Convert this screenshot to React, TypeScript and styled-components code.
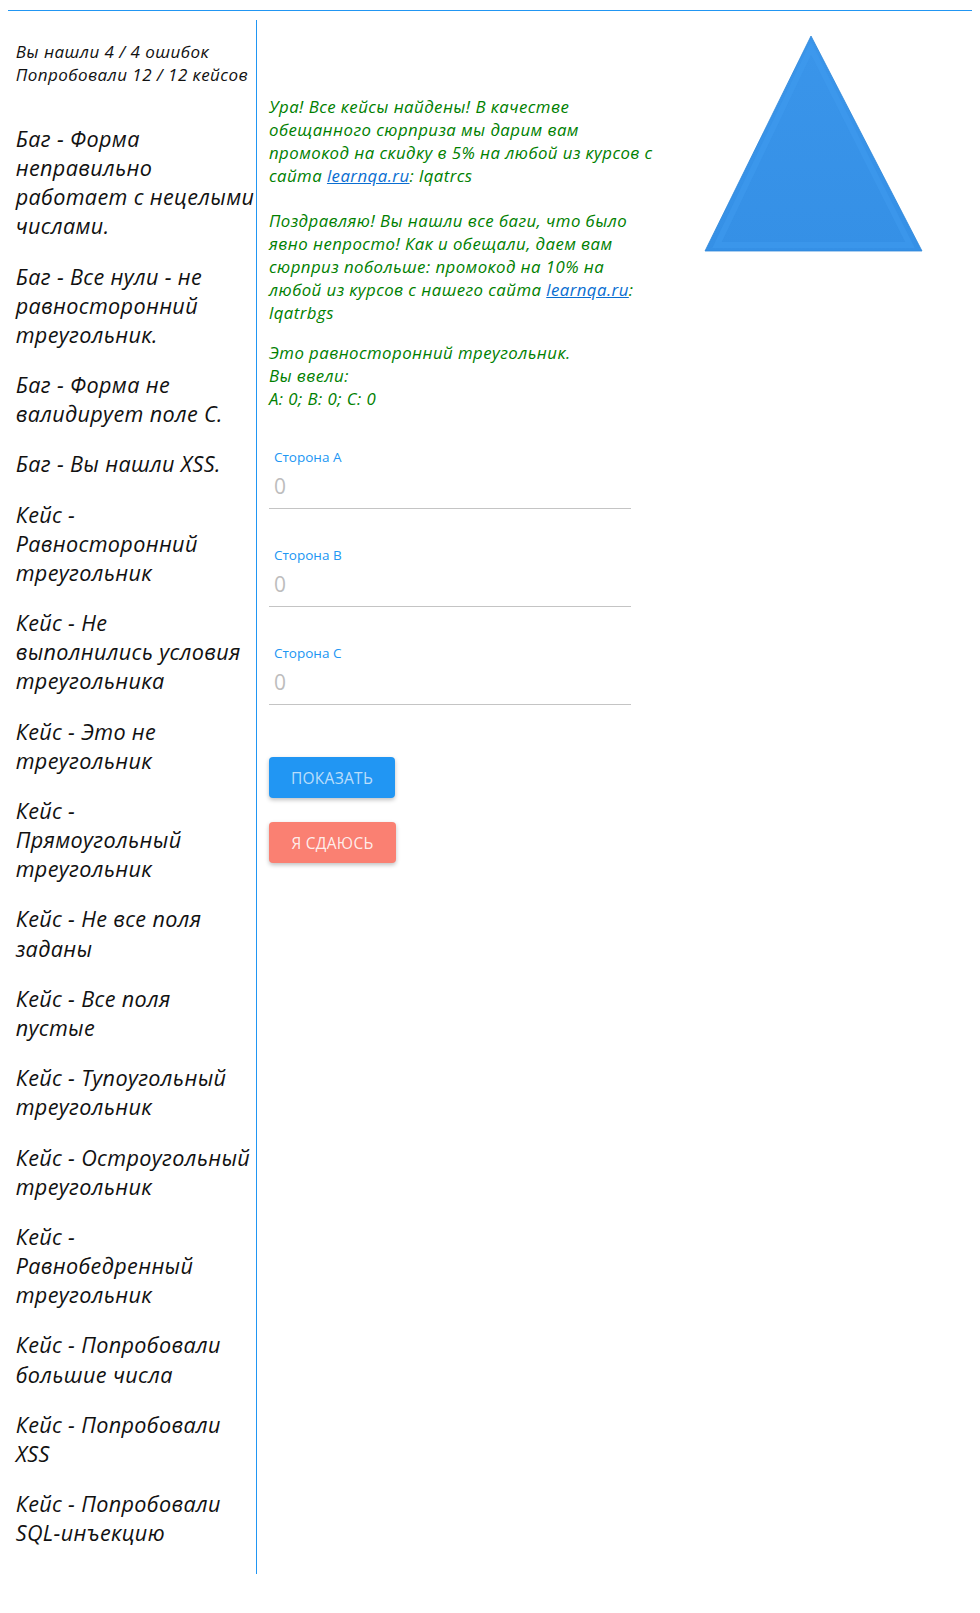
import { createGlobalStyle, styled } from "styled-components";

const GlobalStyle = createGlobalStyle`
    body {
        margin: 8px;
        font-family: "Open Sans", "Liberation Sans", sans-serif;
        background: #fff;
        color: #111;
    }
    `;

const TopRule = styled.div`
    margin-top: 2px;
    width: calc(100vw - 8px);
    height: 1px;
    background: #2196f3;
    `;

const Layout = styled.div`
    display: flex;
    flex-direction: row;
    align-items: flex-start;
    margin-top: 9px;
    `;

const Sidebar = styled.aside`
    width: 249px;
    box-sizing: border-box;
    padding: 21px 0 5px 7.7px;
    border-right: 1px solid #2196f3;
    font-style: italic;
    `;

const Stats = styled.div`
    font-size: 17px;
    letter-spacing: 0.45px;
    line-height: 22.5px;
    margin-bottom: 38px;
    white-space: nowrap;
    `;

const CaseItem = styled.p`
    margin: 0 0 21.2px;
    font-size: 21.6px;
    letter-spacing: 0.35px;
    line-height: 29.1px;
    white-space: pre;
    `;

const Main = styled.main`
    flex: 1;
    display: flex;
    flex-direction: row;
    align-items: flex-start;
    `;

const Content = styled.div`
    width: 395px;
    padding: 75px 0 0 12px;
    `;

const Message = styled.p<{ $gap?: number }>`
    margin: 0 0 ${(p) => p.$gap ?? 22}px;
    color: #008000;
    font-style: italic;
    font-size: 16.8px;
    letter-spacing: 0.45px;
    line-height: 23px;
    white-space: nowrap;
    `;

const Link = styled.a`
    color: #0a6ed1;
    text-decoration: underline;
    `;

const Form = styled.form`
    display: flex;
    flex-direction: column;
    width: 362px;
    margin-top: 38px;
    `;

const Field = styled.label`
    display: flex;
    flex-direction: column;
    padding: 0 0 0 5px;
    border-bottom: 1px solid #c4c4c4;
    margin-bottom: 37px;
    `;

const FieldLabel = styled.span`
    color: #2196f3;
    font-size: 13.5px;
    line-height: 18px;
    `;

const FieldValue = styled.span`
    color: #bdbdbd;
    font-size: 21px;
    line-height: 28px;
    margin: 6px 0 8px;
    `;

const Button = styled.button<{ $tone: "blue" | "salmon" }>`
    align-self: flex-start;
    width: ${(p) => (p.$tone === "blue" ? 126 : 127)}px;
    height: 41px;
    border: none;
    border-radius: 4px;
    background: ${(p) => (p.$tone === "blue" ? "#2196f3" : "#fa8072")};
    color: ${(p) => (p.$tone === "blue" ? "rgba(255,255,255,0.7)" : "rgba(255,255,255,0.87)")};
    font-family: "Open Sans", "Liberation Sans", sans-serif;
    font-size: 15.5px;
    font-weight: 500;
    text-transform: uppercase;
    letter-spacing: 0.3px;
    box-shadow: 0 2px 4px rgba(0, 0, 0, 0.25);
    `;

const ButtonStack = styled.div`
    display: flex;
    flex-direction: column;
    gap: 24px;
    margin-top: 15px;
    `;

const Picture = styled.div`
    margin: 14px 0 0 39px;
    `;

const cases = [
    "Баг - Форма\nнеправильно\nработает с нецелыми\nчислами.",
    "Баг - Все нули - не\nравносторонний\nтреугольник.",
    "Баг - Форма не\nвалидирует поле C.",
    "Баг - Вы нашли XSS.",
    "Кейс -\nРавносторонний\nтреугольник",
    "Кейс - Не\nвыполнились условия\nтреугольника",
    "Кейс - Это не\nтреугольник",
    "Кейс -\nПрямоугольный\nтреугольник",
    "Кейс - Не все поля\nзаданы",
    "Кейс - Все поля\nпустые",
    "Кейс - Тупоугольный\nтреугольник",
    "Кейс - Остроугольный\nтреугольник",
    "Кейс -\nРавнобедренный\nтреугольник",
    "Кейс - Попробовали\nбольшие числа",
    "Кейс - Попробовали\nXSS",
    "Кейс - Попробовали\nSQL-инъекцию",
];

const sides = ["A", "B", "C"];

const Triangle = () => (
    <svg width="222" height="222" viewBox="0 0 222 222">
        <defs>
            <linearGradient id="tri" x1="0" y1="0" x2="0" y2="1">
                <stop offset="0" stopColor="#3a95ea" />
                <stop offset="1" stopColor="#3590e6" />
            </linearGradient>
        </defs>
        <polygon points="108,2 2,217 219,217" fill="url(#tri)" stroke="#2f86d8" strokeWidth="0.8" />
        <polygon points="108,14 14,211 207,211" fill="none" stroke="#3f9cef" strokeWidth="6" opacity="0.5" />
    </svg>
);

const App = () => {
    return (
        <>
            <GlobalStyle />
            <TopRule />
            <Layout>
                <Sidebar>
                    <Stats>
                        Вы нашли 4 / 4 ошибок
                        <br />
                        Попробовали 12 / 12 кейсов
                    </Stats>
                    {cases.map((c) => (
                        <CaseItem key={c}>{c}</CaseItem>
                    ))}
                </Sidebar>
                <Main>
                    <Content>
                        <Message>
                            Ура! Все кейсы найдены! В качестве
                            <br />
                            обещанного сюрприза мы дарим вам
                            <br />
                            промокод на скидку в 5% на любой из курсов с
                            <br />
                            сайта <Link href="#">learnqa.ru</Link>: lqatrcs
                        </Message>
                        <Message $gap={17}>
                            Поздравляю! Вы нашли все баги, что было
                            <br />
                            явно непросто! Как и обещали, даем вам
                            <br />
                            сюрприз побольше: промокод на 10% на
                            <br />
                            любой из курсов с нашего сайта <Link href="#">learnqa.ru</Link>:
                            <br />
                            lqatrbgs
                        </Message>
                        <Message $gap={0}>
                            Это равносторонний треугольник.
                            <br />
                            Вы ввели:
                            <br />
                            A: 0; B: 0; C: 0
                        </Message>
                        <Form onSubmit={(e) => e.preventDefault()}>
                            {sides.map((s) => (
                                <Field key={s}>
                                    <FieldLabel>Сторона {s}</FieldLabel>
                                    <FieldValue>0</FieldValue>
                                </Field>
                            ))}
                            <ButtonStack>
                                <Button type="button" $tone="blue">Показать</Button>
                                <Button type="button" $tone="salmon">Я сдаюсь</Button>
                            </ButtonStack>
                        </Form>
                    </Content>
                    <Picture>
                        <Triangle />
                    </Picture>
                </Main>
            </Layout>
        </>
    );
};

export default App;
